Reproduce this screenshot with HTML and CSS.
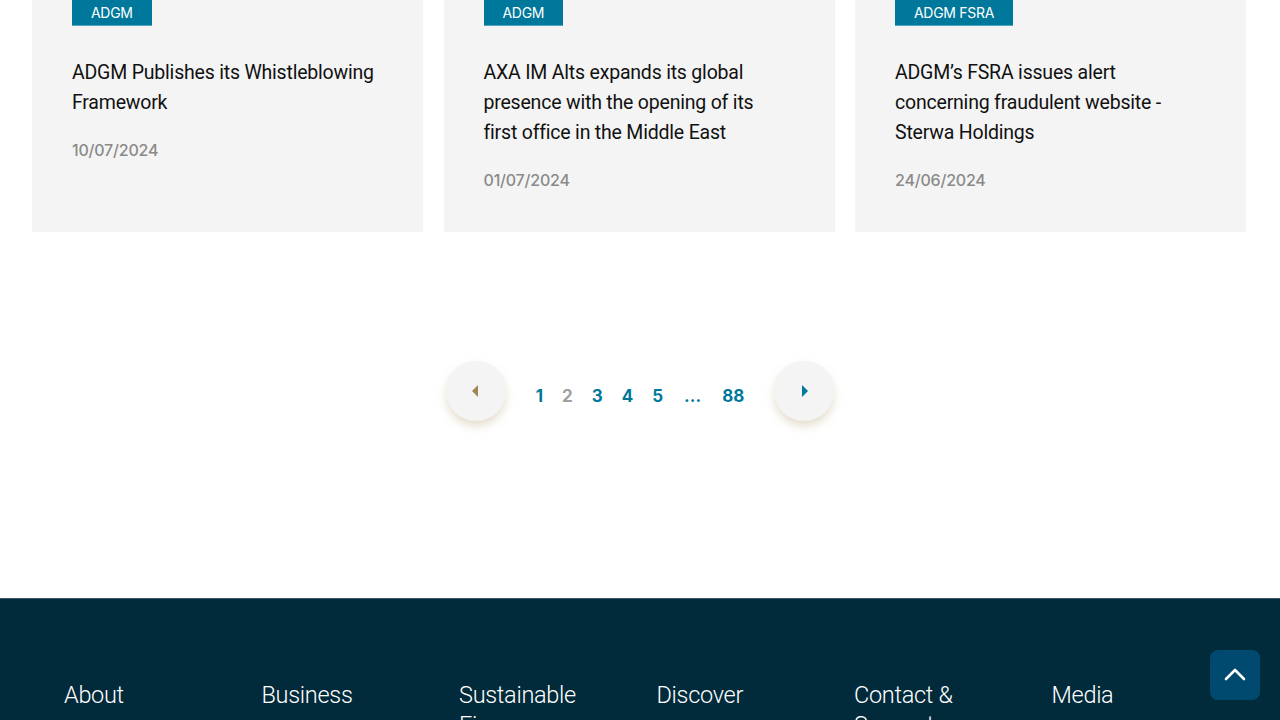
FILE: index.html
```html
<!DOCTYPE html>
<html lang="en">
<head>
<meta charset="utf-8">
<title>News</title>
<link rel="stylesheet" href="styles.css">
</head>
<body>
<main class="news">
  <div class="cards">
    <article class="card">
      <span class="tag">ADGM</span>
      <h3 class="card-title">ADGM Publishes its Whistleblowing Framework</h3>
      <p class="card-date">10/07/2024</p>
    </article>
    <article class="card">
      <span class="tag">ADGM</span>
      <h3 class="card-title">AXA IM Alts expands its global presence with the opening of its first office in the Middle East</h3>
      <p class="card-date">01/07/2024</p>
    </article>
    <article class="card">
      <span class="tag">ADGM FSRA</span>
      <h3 class="card-title">ADGM’s FSRA issues alert concerning fraudulent website - Sterwa Holdings</h3>
      <p class="card-date">24/06/2024</p>
    </article>
  </div>

  <nav class="pager">
    <button class="pager-btn prev" aria-label="Previous"><span class="tri tri-left"></span></button>
    <ul class="pages">
      <li class="page">1</li>
      <li class="page current">2</li>
      <li class="page">3</li>
      <li class="page">4</li>
      <li class="page">5</li>
      <li class="page">...</li>
      <li class="page">88</li>
    </ul>
    <button class="pager-btn next" aria-label="Next"><span class="tri tri-right"></span></button>
  </nav>
</main>

<footer class="footer">
  <div class="footer-cols">
    <div class="footer-col">About</div>
    <div class="footer-col">Business</div>
    <div class="footer-col">Sustainable Finance</div>
    <div class="footer-col">Discover</div>
    <div class="footer-col">Contact &amp; Support</div>
    <div class="footer-col">Media</div>
  </div>
  <button class="to-top" aria-label="Back to top">
    <svg width="24" height="24" viewBox="0 0 24 24" fill="none" stroke="#fff" stroke-width="2.6" stroke-linecap="round" stroke-linejoin="round"><path d="M3 16 L12 7 L21 16"/></svg>
  </button>
</footer>
</body>
</html>
```
FILE: styles.css
```css
* { box-sizing: border-box; }
html, body { margin: 0; padding: 0; }
body {
  font-family: "Roboto", "Open Sans", sans-serif;
  background: #fff;
  color: #111;
  overflow: hidden;
  height: 720px;
}
.news { height: 598px; display: flex; flex-direction: column; }
.cards {
  display: grid;
  grid-template-columns: repeat(3, 391px);
  column-gap: 20.5px;
  padding-left: 32px;
}
.card {
  background: #f4f4f4;
  padding: 0 46px 42px 40px;
  height: 232px;
}
.tag {
  display: inline-block;
  background: #00789b;
  color: #fff;
  font-family: "Inter", sans-serif;
  font-size: 14px;
  letter-spacing: -0.3px;
  line-height: 25px;
  padding: 0 19px;
  border-bottom: 1px solid #4fa3be;
}
.card-title {
  margin: 32px 0 0;
  font-weight: 400;
  font-size: 19.5px;
  letter-spacing: -0.2px;
  line-height: 30px;
  color: #111;
}
.card-date {
  margin: 22px 0 0;
  font-family: "Inter", sans-serif;
  font-size: 16px;
  line-height: 20px;
  font-weight: 500;
  color: #8a8a8a;
  letter-spacing: -0.2px;
}
.pager {
  display: flex;
  align-items: center;
  justify-content: center;
  margin-top: 129px;
  gap: 30px;
}
.pager-btn {
  width: 60px;
  height: 60px;
  border-radius: 50%;
  border: 0;
  background: #f4f4f4;
  box-shadow: 0 5px 8px rgba(160, 135, 80, 0.28);
  display: flex;
  align-items: center;
  justify-content: center;
  padding: 0;
}
.tri { width: 0; height: 0; border-top: 6px solid transparent; border-bottom: 6px solid transparent; }
.tri-left { border-right: 6px solid #a08655; margin-left: -2px; }
.tri-right { border-left: 6px solid #00789b; margin-left: 2px; }
.pages {
  list-style: none;
  margin: 10px 0 0;
  padding: 0;
  display: flex;
  gap: 19px;
  font-family: "Inter", sans-serif;
  font-weight: 700;
  font-size: 17px;
  color: #00789b;
}
.page.current { color: #a0a0a0; }
.page:nth-child(6) { margin: 0 2px; }
.footer {
  background: #012a3b;
  height: 122px;
  padding: 81px 0 0 64px;
  display: flex;
  align-items: flex-start;
  border-top: 1px solid #3e5966;
}
.footer-cols {
  display: grid;
  grid-template-columns: repeat(6, 197.5px);
  width: 1185px;
}
.footer-col {
  font-family: "Roboto", sans-serif;
  font-weight: 300;
  font-size: 23.5px;
  letter-spacing: -0.3px;
  line-height: 30px;
  color: #fff;
  max-width: 140px;
}
.to-top {
  margin: -30px 0 0 -39px;
  width: 50px;
  height: 50px;
  border: 0;
  border-radius: 8px;
  background: #004a6f;
  display: flex;
  align-items: center;
  justify-content: center;
  padding: 0;
  flex-shrink: 0;
}
```
